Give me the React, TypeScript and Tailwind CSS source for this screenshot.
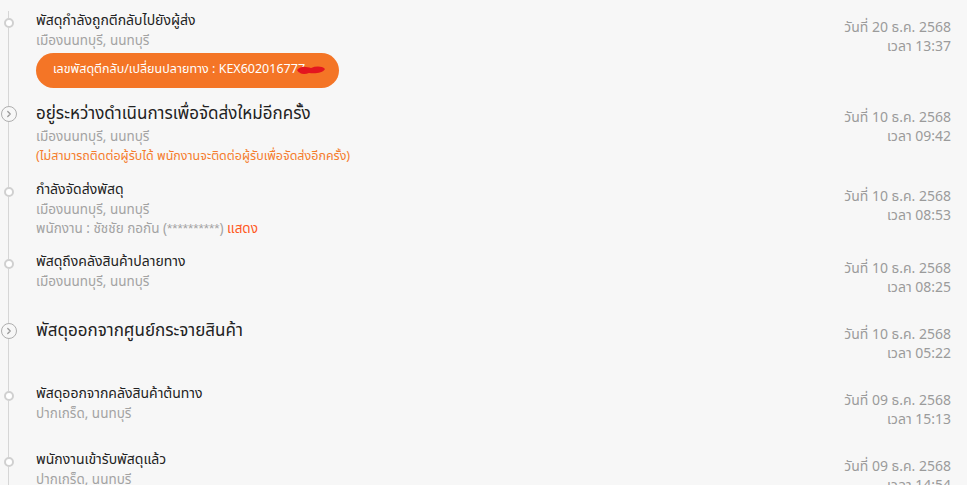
import { ChevronRight } from "lucide-react";

type Step = {
  title: string;
  big?: boolean;
  lines: string[];
  note?: string;
  staff?: boolean;
  badge?: string;
  date: string;
  time: string;
};

const steps: Step[] = [
  {
    title: "พัสดุกำลังถูกตีกลับไปยังผู้ส่ง",
    lines: ["เมืองนนทบุรี, นนทบุรี"],
    badge: "เลขพัสดุตีกลับ/เปลี่ยนปลายทาง : KEX60201677",
    date: "วันที่ 20 ธ.ค. 2568",
    time: "เวลา 13:37",
  },
  {
    title: "อยู่ระหว่างดำเนินการเพื่อจัดส่งใหม่อีกครั้ง",
    big: true,
    lines: ["เมืองนนทบุรี, นนทบุรี"],
    note: "(ไม่สามารถติดต่อผู้รับได้ พนักงานจะติดต่อผู้รับเพื่อจัดส่งอีกครั้ง)",
    date: "วันที่ 10 ธ.ค. 2568",
    time: "เวลา 09:42",
  },
  {
    title: "กำลังจัดส่งพัสดุ",
    lines: ["เมืองนนทบุรี, นนทบุรี"],
    staff: true,
    date: "วันที่ 10 ธ.ค. 2568",
    time: "เวลา 08:53",
  },
  {
    title: "พัสดุถึงคลังสินค้าปลายทาง",
    lines: ["เมืองนนทบุรี, นนทบุรี"],
    date: "วันที่ 10 ธ.ค. 2568",
    time: "เวลา 08:25",
  },
  {
    title: "พัสดุออกจากศูนย์กระจายสินค้า",
    big: true,
    lines: [],
    date: "วันที่ 10 ธ.ค. 2568",
    time: "เวลา 05:22",
  },
  {
    title: "พัสดุออกจากคลังสินค้าต้นทาง",
    lines: ["ปากเกร็ด, นนทบุรี"],
    date: "วันที่ 09 ธ.ค. 2568",
    time: "เวลา 15:13",
  },
  {
    title: "พนักงานเข้ารับพัสดุแล้ว",
    lines: ["ปากเกร็ด, นนทบุรี"],
    date: "วันที่ 09 ธ.ค. 2568",
    time: "เวลา 14:54",
  },
];

const Marker = ({ big }: { big?: boolean }) => (
  <div className="flex w-[17px] shrink-0 flex-col items-center">
    {big ? (
      <>
        <div className="h-[5px] w-px bg-[#d6d6d6]" />
        <div className="flex h-[16px] w-[16px] items-center justify-center rounded-full border-[1.5px] border-[#aeaeae] bg-[#f7f7f7]">
          <ChevronRight className="h-[10px] w-[10px] text-[#9a9a9a]" strokeWidth={3} />
        </div>
      </>
    ) : (
      <>
        <div className="h-[7px] w-px bg-[#d6d6d6]" />
        <div className="h-[10px] w-[10px] rounded-full border-2 border-[#d0d0d0] bg-white" />
      </>
    )}
    <div className="w-px flex-1 bg-[#d6d6d6]" />
  </div>
);

const Row = ({ s }: { s: Step }) => (
  <div className="flex min-h-[66px]">
    <Marker big={s.big} />
    <div className="ml-[19px] flex flex-1 justify-between pb-[13px]">
      <div className="flex flex-col">
        <div
          className={
            s.big
              ? "text-[17px] leading-[26px] text-[#222222]"
              : "text-[14px] leading-[20px] text-[#222222]"
          }
        >
          {s.title}
        </div>
        {s.lines.map((l) => (
          <div key={l} className="text-[13.5px] leading-[20px] text-[#a3a3a3]">
            {l}
          </div>
        ))}
        {s.note && (
          <div className="text-[12.5px] leading-[20px] text-[#f57c2c]">{s.note}</div>
        )}
        {s.staff && (
          <div className="flex h-[19px] items-center whitespace-pre text-[13.5px] text-[#a3a3a3]">
            <span>พนักงาน : ชัชชัย กอกัน (</span>
            <span style={{ fontFamily: '"Liberation Sans", sans-serif' }}>**********</span>
            <span>) </span>
            <span className="text-[#ff5a1f]">แสดง</span>
          </div>
        )}
        {s.badge && (
          <div className="mt-[2px] flex h-[35px] w-[303px] items-center rounded-full bg-[#f47526] px-[17px] text-[12.5px] text-white">
            <span>{s.badge}</span>
            <span className="relative inline-block">
              7
              <svg
                className="absolute left-[-3px] top-[3px]"
                width="32"
                height="12"
                viewBox="0 0 32 12"
              >
                <path
                  d="M2 6 C6 1, 12 3, 16 4 C21 2, 27 2, 30 5 C28 9, 20 10, 14 9 C9 11, 4 10, 2 6 Z"
                  fill="#e3161f"
                />
              </svg>
            </span>
          </div>
        )}
      </div>
      <div className="flex shrink-0 flex-col items-end pt-[7px] text-[14px] leading-[19px] text-[#9b9b9b]">
        <div>{s.date}</div>
        <div>{s.time}</div>
      </div>
    </div>
  </div>
);

export default function App() {
  return (
    <div
      className="min-h-screen bg-[#f7f7f7] pr-[16px] pt-[11px]"
      style={{ fontFamily: '"Noto Sans Thai", "Noto Sans", "Liberation Sans", sans-serif' }}
    >
      {steps.map((s) => (
        <Row key={s.title} s={s} />
      ))}
    </div>
  );
}
